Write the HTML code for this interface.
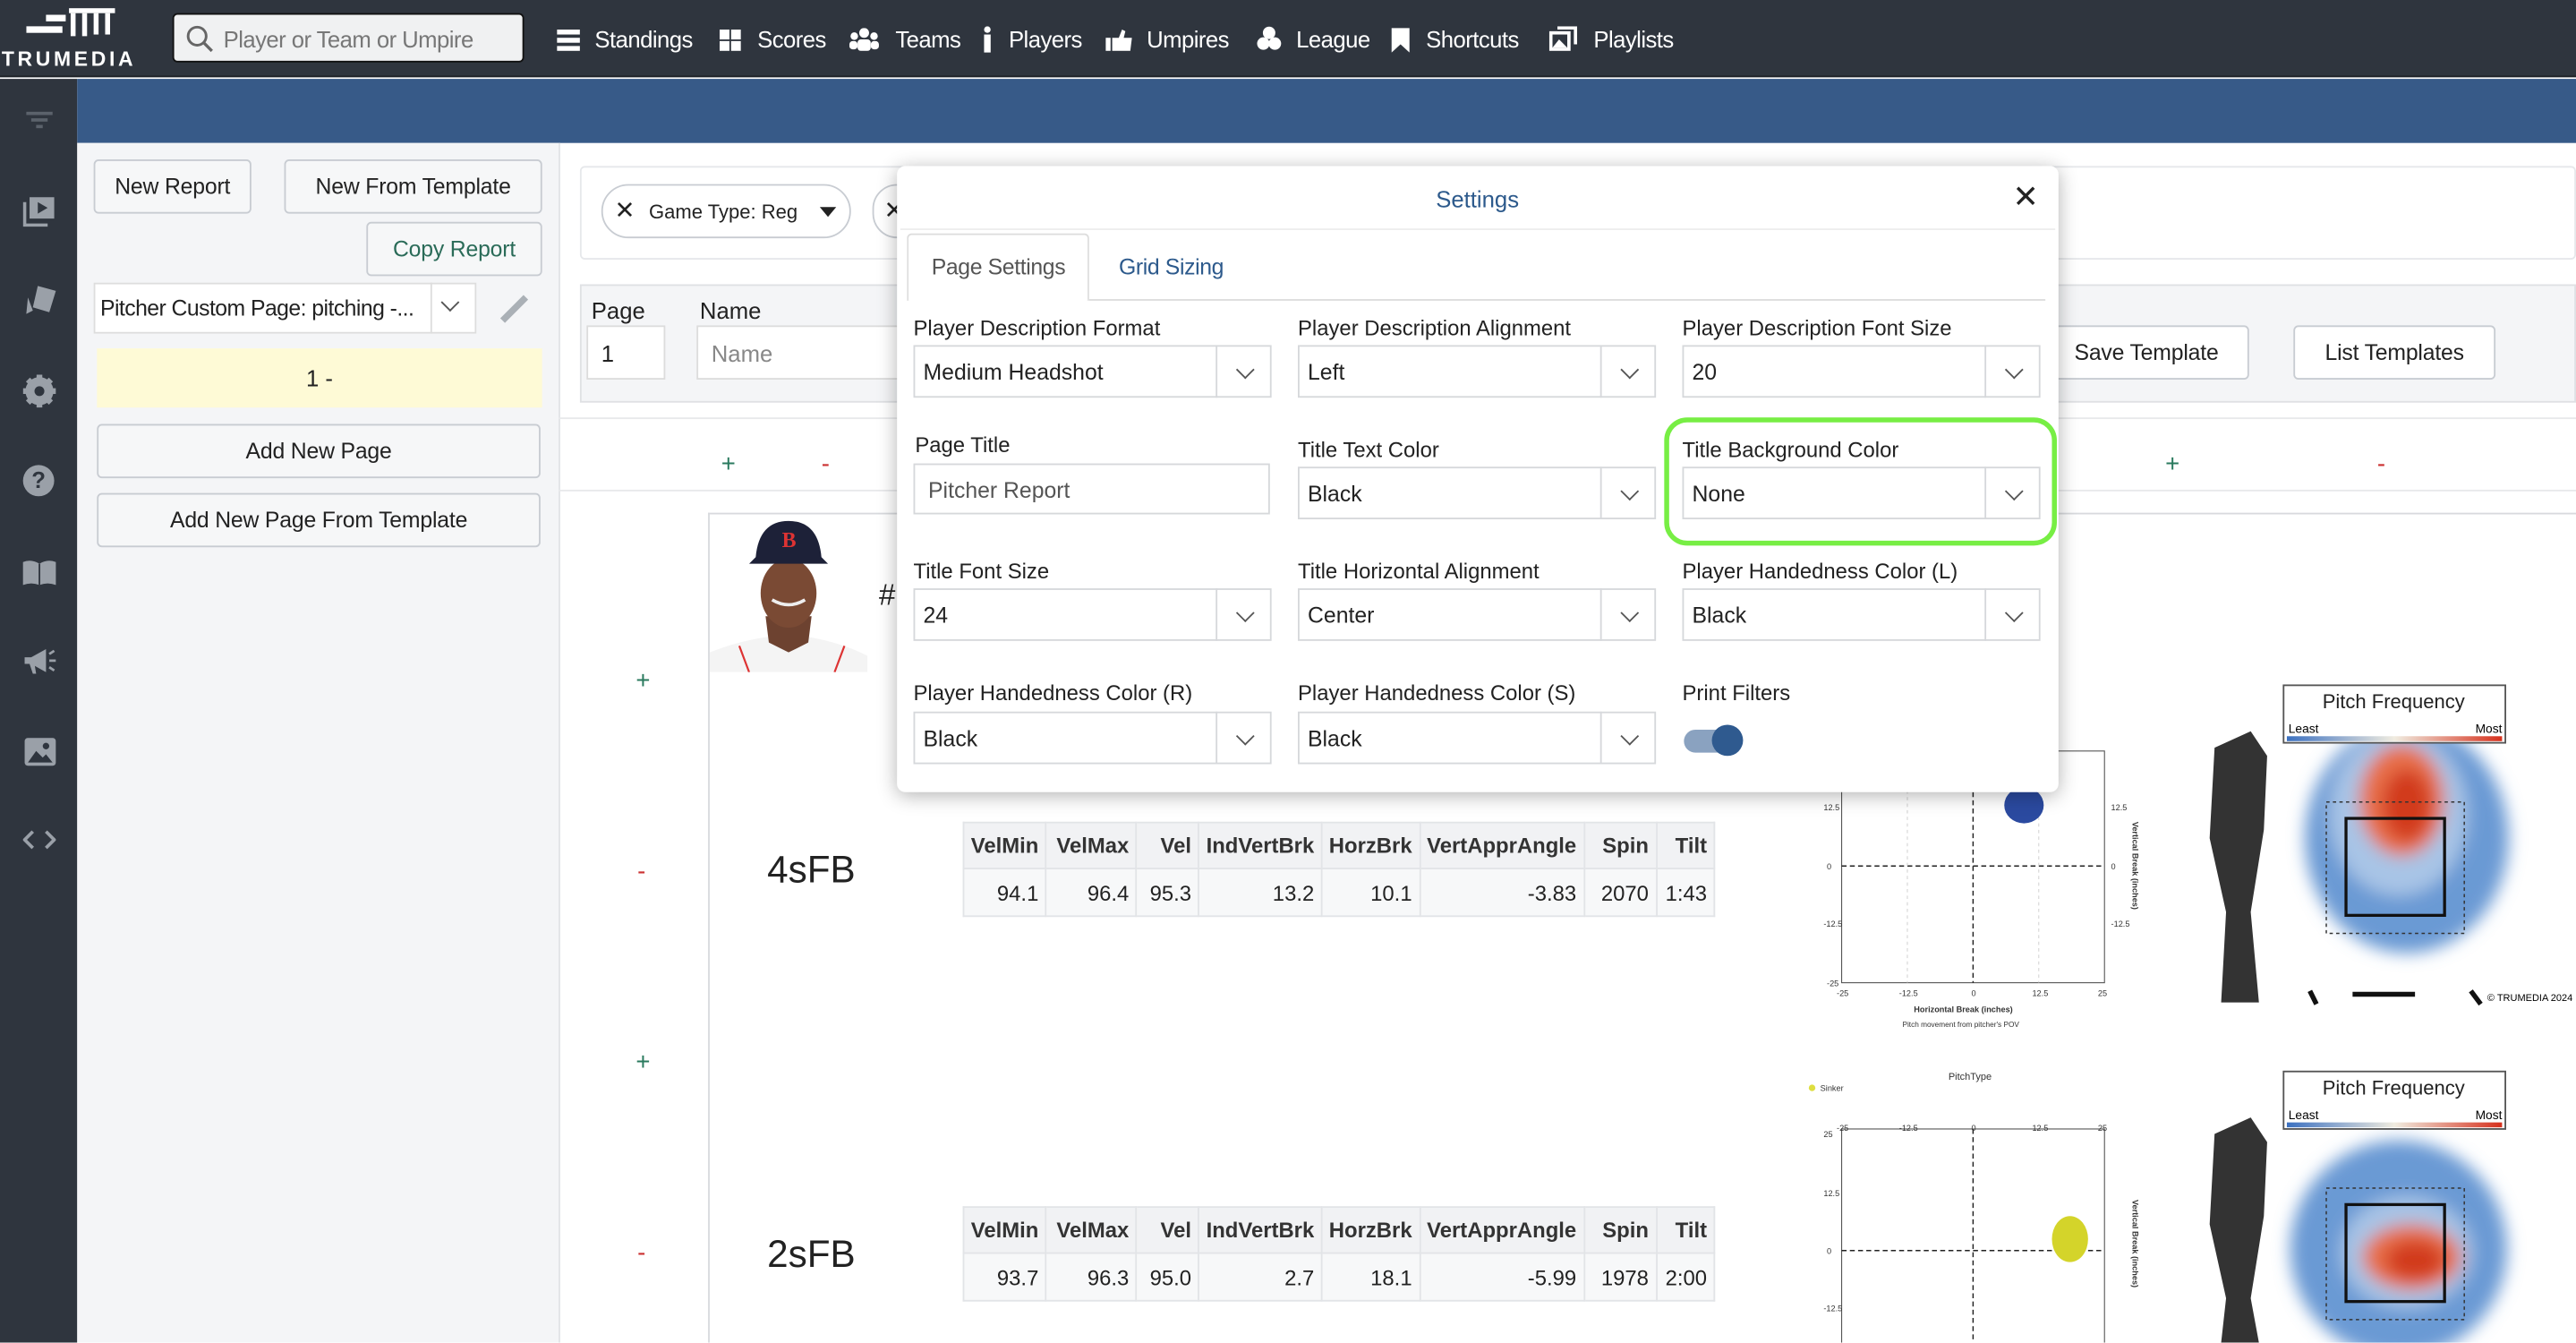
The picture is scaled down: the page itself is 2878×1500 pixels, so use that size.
<!DOCTYPE html>
<html><head><meta charset="utf-8"><style>
*{box-sizing:border-box;margin:0;padding:0}
html,body{width:2878px;height:1500px;overflow:hidden;background:#fff}
#w{position:absolute;left:0;top:0;width:1568px;height:817px;transform:scale(1.83546);transform-origin:0 0;font-family:"Liberation Sans",sans-serif;color:#222;overflow:hidden}
.a{position:absolute}
.nav{left:0;top:0;width:1568px;height:47px;background:#2f353e;border-bottom:1px solid #1e2228}
.ni{position:absolute;top:16px;color:#fff;font-size:14px;white-space:nowrap;letter-spacing:-0.3px}
.ic{position:absolute}
.btn{position:absolute;border:1px solid #c8ccd2;border-radius:3px;background:#f6f7f8;font-size:13.5px;text-align:center;color:#222;letter-spacing:-0.1px}
.sel{position:absolute;border:1px solid #d6d8db;background:#fff;height:32px;font-size:13.5px;padding:8px 0 0 5px}
.sel:after{content:"";position:absolute;right:-1px;top:-1px;width:33px;height:32px;border-left:1px solid #d6d8db}
.chev{position:absolute;right:11px;top:10px;width:8px;height:8px;border-right:1.5px solid #555;border-bottom:1.5px solid #555;transform:rotate(45deg)}
.lbl{position:absolute;font-size:13px;color:#222}
table{border-collapse:collapse;font-size:13px}
td{border:1px solid #e2e4e7;padding:0 4px;text-align:right;height:29px}
tr.h td{background:#f1f2f4;font-weight:bold;color:#333;height:28px}
tr.r td{background:#f7f8f9}
</style></head><body><div id="w">

<div class="a nav"></div>
<svg class="a" style="left:16px;top:3px" width="54" height="22" viewBox="0 0 54 22"><g fill="#fff"><rect x="0" y="13" width="22" height="4"/><rect x="12" y="6" width="12" height="4"/><rect x="26" y="2" width="28" height="3"/><rect x="27" y="5" width="3" height="14"/><rect x="34" y="5" width="3" height="14"/><rect x="41" y="5" width="3" height="13"/><rect x="48" y="5" width="3" height="13"/></g></svg>
<div class="a" style="left:1px;top:29px;color:#fff;font-size:12.5px;font-weight:bold;letter-spacing:2px">TRUMEDIA</div>
<div class="a" style="left:105px;top:8px;width:214px;height:30px;background:#f0f1f2;border-radius:3px;border:1px solid #111"></div>
<svg class="a" style="left:113px;top:15px" width="17" height="17"><circle cx="7" cy="7" r="5.5" fill="none" stroke="#666" stroke-width="1.6"/><line x1="11" y1="11" x2="16" y2="16" stroke="#666" stroke-width="1.8"/></svg>
<div class="a" style="left:136px;top:16px;font-size:14px;color:#777;letter-spacing:-0.3px">Player or Team or Umpire</div>

<svg class="ic" style="left:339px;top:18px" width="14" height="13"><g fill="#fff"><rect x="0" y="0" width="14" height="3"/><rect x="0" y="5" width="14" height="3"/><rect x="0" y="10" width="14" height="3"/></g></svg>
<div class="ni" style="left:362px">Standings</div>
<svg class="ic" style="left:438px;top:18px" width="13" height="13"><g fill="#fff"><rect x="0" y="0" width="6" height="6"/><rect x="7" y="0" width="6" height="6"/><rect x="0" y="7" width="6" height="6"/><rect x="7" y="7" width="6" height="6"/></g></svg>
<div class="ni" style="left:461px">Scores</div>
<svg class="ic" style="left:517px;top:17px" width="18" height="14"><g fill="#fff"><circle cx="9" cy="3" r="3"/><circle cx="3" cy="5" r="2.3"/><circle cx="15" cy="5" r="2.3"/><rect x="5" y="7" width="8" height="7" rx="2"/><rect x="0" y="8" width="5" height="5" rx="2"/><rect x="13" y="8" width="5" height="5" rx="2"/></g></svg>
<div class="ni" style="left:545px">Teams</div>
<svg class="ic" style="left:598px;top:16px" width="6" height="16"><g fill="#fff"><circle cx="3" cy="2" r="2"/><rect x="1" y="5" width="4" height="11"/></g></svg>
<div class="ni" style="left:614px">Players</div>
<svg class="ic" style="left:673px;top:18px" width="16" height="13"><g fill="#fff"><rect x="0" y="5" width="3" height="8"/><path d="M4 5 L8 5 L10 0 L12 1 L11 5 L16 5 L15 13 L4 13Z"/></g></svg>
<div class="ni" style="left:698px">Umpires</div>
<svg class="ic" style="left:765px;top:16px" width="15" height="15"><g fill="#fff"><circle cx="7.5" cy="4" r="3.8"/><circle cx="4" cy="10.5" r="3.8"/><circle cx="11" cy="10.5" r="3.8"/></g></svg>
<div class="ni" style="left:789px">League</div>
<svg class="ic" style="left:847px;top:17px" width="11" height="15"><path d="M0 0 H11 V15 L5.5 10 L0 15Z" fill="#fff"/></svg>
<div class="ni" style="left:868px">Shortcuts</div>
<svg class="ic" style="left:943px;top:16px" width="17" height="15"><g fill="none" stroke="#fff" stroke-width="2"><rect x="1" y="4" width="11" height="10"/><path d="M5 1 H16 V11"/></g><path d="M2 13 L6 8 L11 13Z" fill="#fff"/></svg>
<div class="ni" style="left:970px">Playlists</div>

<!-- sidebar -->
<div class="a" style="left:0;top:48px;width:47px;height:769px;background:#2f353e"></div>
<div class="a" style="left:16px;top:68px;width:16px;height:2px;background:#5b626b"></div>
<div class="a" style="left:19px;top:72px;width:10px;height:2px;background:#5b626b"></div>
<div class="a" style="left:22px;top:76px;width:4px;height:2px;background:#5b626b"></div>
<svg class="a" style="left:14px;top:118px" width="20" height="20"><path d="M4 2 H19 V15 H4Z" fill="#9aa0a8"/><path d="M9 5 L15 8.5 L9 12Z" fill="#2f353e"/><path d="M1 5 V19 H15" stroke="#9aa0a8" stroke-width="2" fill="none"/></svg>
<svg class="a" style="left:15px;top:173px" width="20" height="20"><path d="M8 1 L19 4 L15 17 L5 14Z" fill="#9aa0a8"/><path d="M2 8 L5 16 L1 18Z" fill="#9aa0a8"/></svg>
<svg class="a" style="left:14px;top:228px" width="20" height="20"><circle cx="10" cy="10" r="6.5" fill="none" stroke="#9aa0a8" stroke-width="4"/><g stroke="#9aa0a8" stroke-width="3.5"><line x1="10" y1="0" x2="10" y2="20"/><line x1="0" y1="10" x2="20" y2="10"/><line x1="3" y1="3" x2="17" y2="17"/><line x1="17" y1="3" x2="3" y2="17"/></g><circle cx="10" cy="10" r="3" fill="#2f353e"/></svg>
<div class="a" style="left:14px;top:283px;width:19px;height:19px;border-radius:50%;background:#9aa0a8;color:#2f353e;font-size:14px;font-weight:bold;text-align:center;line-height:19px">?</div>
<svg class="a" style="left:13px;top:340px" width="22" height="17"><path d="M1 2 Q6 0 11 3 Q16 0 21 2 V16 Q16 14 11 16 Q6 14 1 16Z" fill="#9aa0a8"/><line x1="11" y1="3" x2="11" y2="16" stroke="#2f353e"/></svg>
<svg class="a" style="left:14px;top:394px" width="20" height="17"><path d="M1 6 H5 L14 1 V15 L5 10 H1Z" fill="#9aa0a8"/><path d="M4 10 L6 16 H8 L7 10" fill="#9aa0a8"/><g stroke="#9aa0a8" stroke-width="1.5"><line x1="16" y1="8" x2="20" y2="8"/><line x1="16" y1="4" x2="19" y2="2"/><line x1="16" y1="12" x2="19" y2="14"/></g></svg>
<svg class="a" style="left:15px;top:449px" width="19" height="17"><rect x="0" y="0" width="19" height="17" rx="2" fill="#9aa0a8"/><path d="M2 15 L7 8 L11 12 L13 10 L17 15Z" fill="#2f353e"/><circle cx="13" cy="5" r="2" fill="#2f353e"/></svg>
<svg class="a" style="left:14px;top:505px" width="20" height="12"><path d="M6 1 L1 6 L6 11 M14 1 L19 6 L14 11" stroke="#9aa0a8" stroke-width="2" fill="none"/></svg>

<div class="a" style="left:47px;top:48px;width:1521px;height:39px;background:#375a88"></div>

<!-- left panel -->
<div class="a" style="left:47px;top:87px;width:294px;height:730px;background:#f4f5f7;border-right:1px solid #e2e4e7"></div>
<div class="btn" style="left:57px;top:97px;width:96px;height:33px;line-height:31px">New Report</div>
<div class="btn" style="left:173px;top:97px;width:157px;height:33px;line-height:31px">New From Template</div>
<div class="btn" style="left:223px;top:135px;width:107px;height:33px;line-height:31px;color:#2a6b58">Copy Report</div>
<div class="a" style="left:57px;top:172px;width:233px;height:31px;background:#fff;border:1px solid #ddd"></div>
<div class="a" style="left:262px;top:172px;width:1px;height:31px;background:#ddd"></div>
<div class="a" style="left:61px;top:180px;font-size:13.5px;letter-spacing:-0.3px;width:198px;overflow:hidden;white-space:nowrap">Pitcher Custom Page: pitching -...</div>
<div class="a" style="left:270px;top:180px;width:8px;height:8px;border-right:1.5px solid #555;border-bottom:1.5px solid #555;transform:rotate(45deg)"></div>
<div class="a" style="left:311px;top:178px;width:4px;height:20px;background:#aab0b6;transform:rotate(45deg)"></div>
<div class="a" style="left:59px;top:212px;width:271px;height:36px;background:#fefad6;text-align:center;line-height:36px;font-size:14px">1 -</div>
<div class="btn" style="left:59px;top:258px;width:270px;height:33px;line-height:31px">Add New Page</div>
<div class="btn" style="left:59px;top:300px;width:270px;height:33px;line-height:31px">Add New Page From Template</div>

<!-- main -->
<div class="a" style="left:353px;top:101px;width:1215px;height:57px;border:1px solid #e6e8eb;border-radius:3px"></div>
<div class="a" style="left:366px;top:112px;width:152px;height:33px;border:1px solid #c8ccd2;border-radius:17px;font-size:12px;padding:9px 0 0 28px">Game Type: Reg</div>
<div class="a" style="left:374px;top:119px;font-size:15px">✕</div>
<div class="a" style="left:499px;top:126px;border-left:5px solid transparent;border-right:5px solid transparent;border-top:6px solid #222"></div>
<div class="a" style="left:531px;top:112px;width:30px;height:33px;border:1px solid #c8ccd2;border-radius:17px"></div>
<div class="a" style="left:538px;top:119px;font-size:15px">✕</div>
<div class="a" style="left:353px;top:173px;width:1215px;height:72px;background:#f4f5f7;border:1px solid #dfe1e4"></div>
<div class="a" style="left:360px;top:181px;font-size:14px">Page</div>
<div class="a" style="left:426px;top:181px;font-size:14px">Name</div>
<div class="a" style="left:357px;top:198px;width:48px;height:33px;background:#fff;border:1px solid #dcdcdc;font-size:14px;padding:8px 0 0 8px">1</div>
<div class="a" style="left:424px;top:198px;width:140px;height:33px;background:#fff;border:1px solid #dcdcdc;font-size:14px;padding:8px 0 0 8px;color:#888">Name</div>
<div class="btn" style="left:1244px;top:198px;width:125px;height:33px;line-height:31px;background:#fff">Save Template</div>
<div class="btn" style="left:1396px;top:198px;width:123px;height:33px;line-height:31px;background:#fff">List Templates</div>
<div class="a" style="left:340px;top:254px;width:1228px;height:1px;background:#e8e9eb"></div>
<div class="a" style="left:439px;top:274px;color:#2a7a5e;font-size:15px">+</div>
<div class="a" style="left:500px;top:274px;color:#c33;font-size:15px">-</div>
<div class="a" style="left:1318px;top:274px;color:#2a7a5e;font-size:15px">+</div>
<div class="a" style="left:1447px;top:274px;color:#c33;font-size:15px">-</div>
<div class="a" style="left:340px;top:298px;width:1228px;height:1px;background:#e8e9eb"></div>
<div class="a" style="left:387px;top:406px;color:#2a7a5e;font-size:15px">+</div>
<div class="a" style="left:388px;top:522px;color:#c33;font-size:15px">-</div>
<div class="a" style="left:387px;top:638px;color:#2a7a5e;font-size:15px">+</div>
<div class="a" style="left:388px;top:754px;color:#c33;font-size:15px">-</div>
<div class="a" style="left:431px;top:312px;width:1137px;height:505px;border-left:1px solid #d8dade;border-top:1px solid #d8dade"></div>
<svg class="a" style="left:432px;top:313px" width="97" height="96" viewBox="0 0 97 96">
<path d="M0 96 L0 84 Q20 76 40 74 L56 74 Q78 77 96 86 L96 96Z" fill="#f4f4f4"/>
<path d="M18 80 L24 96 M82 80 L76 96" stroke="#d33" stroke-width="1.2"/>
<path d="M34 62 L36 78 L48 84 L60 78 L62 62Z" fill="#6d4230"/>
<ellipse cx="48" cy="48" rx="17" ry="21" fill="#7a4a34"/>
<path d="M28 26 Q30 4 48 4 Q66 4 68 26 L72 30 L24 30Z" fill="#1d2138"/>
<text x="44" y="20" font-size="13" font-weight="bold" fill="#d33" font-family="Liberation Serif">B</text>
<path d="M38 52 Q48 58 58 52" stroke="#eee" stroke-width="2" fill="none"/>
</svg>
<div class="a" style="left:535px;top:352px;font-size:18px">#</div>
<div class="a" style="left:467px;top:516px;font-size:23px">4sFB</div>
<div class="a" style="left:467px;top:750px;font-size:23px">2sFB</div>

<table class="a" style="left:586px;top:500px;width:458px">
<tr class="h"><td style="width:50px;text-align:left">VelMin</td><td style="width:55px">VelMax</td><td style="width:38px">Vel</td><td style="width:74px">IndVertBrk</td><td style="width:59px">HorzBrk</td><td style="width:96px">VertApprAngle</td><td style="width:44px">Spin</td><td>Tilt</td></tr>
<tr class="r"><td>94.1</td><td>96.4</td><td>95.3</td><td>13.2</td><td>10.1</td><td>-3.83</td><td>2070</td><td>1:43</td></tr></table>
<table class="a" style="left:586px;top:734px;width:458px">
<tr class="h"><td style="width:50px;text-align:left">VelMin</td><td style="width:55px">VelMax</td><td style="width:38px">Vel</td><td style="width:74px">IndVertBrk</td><td style="width:59px">HorzBrk</td><td style="width:96px">VertApprAngle</td><td style="width:44px">Spin</td><td>Tilt</td></tr>
<tr class="r"><td>93.7</td><td>96.3</td><td>95.0</td><td>2.7</td><td>18.1</td><td>-5.99</td><td>1978</td><td>2:00</td></tr></table>

<svg class="a" style="left:1100px;top:440px" width="210" height="190" viewBox="0 0 210 190" font-family="Liberation Sans" font-size="5" fill="#333">
<rect x="21" y="17" width="160" height="141" fill="none" stroke="#555" stroke-width="0.6"/>
<line x1="101" y1="17" x2="101" y2="158" stroke="#222" stroke-width="0.8" stroke-dasharray="3,2"/>
<line x1="21" y1="87" x2="181" y2="87" stroke="#222" stroke-width="0.8" stroke-dasharray="3,2"/>
<line x1="61" y1="17" x2="61" y2="158" stroke="#ccc" stroke-width="0.5" stroke-dasharray="2,2"/>
<line x1="141" y1="17" x2="141" y2="158" stroke="#ccc" stroke-width="0.5" stroke-dasharray="2,2"/>
<ellipse cx="132" cy="50" rx="12" ry="11" fill="#2b4aa0"/>
<text x="10" y="53">12.5</text><text x="12" y="89">0</text><text x="10" y="124">-12.5</text><text x="12" y="160">-25</text>
<text x="185" y="53">12.5</text><text x="185" y="89">0</text><text x="185" y="124">-12.5</text>
<text x="18" y="166">-25</text><text x="56" y="166">-12.5</text><text x="100" y="166">0</text><text x="137" y="166">12.5</text><text x="177" y="166">25</text>
<text x="65" y="176" font-weight="bold">Horizontal Break (inches)</text><text x="58" y="185" font-size="4.5">Pitch movement from pitcher's POV</text>
<text x="198" y="60" transform="rotate(90 198 60)" font-weight="bold">Vertical Break (inches)</text>
</svg>
<svg class="a" style="left:1100px;top:650px" width="210" height="167" viewBox="0 0 210 167" font-family="Liberation Sans" font-size="5" fill="#333">
<text x="86" y="7" font-size="6">PitchType</text><circle cx="3" cy="12" r="2" fill="#dede40"/><text x="8" y="14">Sinker</text>
<rect x="21" y="37" width="160" height="140" fill="none" stroke="#555" stroke-width="0.6"/>
<line x1="101" y1="37" x2="101" y2="167" stroke="#222" stroke-width="0.8" stroke-dasharray="3,2"/>
<line x1="21" y1="111" x2="181" y2="111" stroke="#222" stroke-width="0.8" stroke-dasharray="3,2"/>
<ellipse cx="160" cy="104" rx="11" ry="14" fill="#d4d42a"/>
<text x="10" y="42">25</text><text x="10" y="78">12.5</text><text x="12" y="113">0</text><text x="10" y="148">-12.5</text>
<text x="18" y="38">-25</text><text x="56" y="38">-12.5</text><text x="100" y="38">0</text><text x="137" y="38">12.5</text><text x="177" y="38">25</text>
<text x="198" y="80" transform="rotate(90 198 80)" font-weight="bold">Vertical Break (inches)</text>
</svg>

<svg class="a" style="left:1340px;top:415px" width="228" height="200" viewBox="0 0 228 200">
<defs><linearGradient id="lg"><stop offset="0" stop-color="#3b70c0"/><stop offset="0.5" stop-color="#f0ece0"/><stop offset="1" stop-color="#d6301c"/></linearGradient>
<filter id="bl"><feGaussianBlur stdDeviation="5"/></filter></defs>
<g filter="url(#bl)">
<ellipse cx="125" cy="95" rx="62" ry="70" fill="#6a9ad4"/>
<ellipse cx="120" cy="80" rx="42" ry="50" fill="#a8c4e6"/>
<ellipse cx="122" cy="72" rx="26" ry="34" fill="#e8704a"/>
<ellipse cx="125" cy="75" rx="15" ry="22" fill="#d23a1c"/>
</g>
<rect x="88" y="83" width="60" height="59" fill="none" stroke="#111" stroke-width="1.8"/>
<rect x="76" y="73" width="84" height="80" fill="none" stroke="#333" stroke-width="0.8" stroke-dasharray="2,2"/>
<path d="M8 40 L30 30 L40 45 L38 90 L30 140 L35 195 L12 195 L15 140 L5 95Z" fill="#333"/>
<rect x="50" y="2" width="135" height="35" fill="#fff" stroke="#555"/>
<text x="117" y="16" text-anchor="middle" font-family="Liberation Sans" font-size="12" fill="#222">Pitch Frequency</text>
<text x="53" y="31" font-family="Liberation Sans" font-size="7.5">Least</text><text x="183" y="31" text-anchor="end" font-family="Liberation Sans" font-size="7.5">Most</text>
<rect x="52" y="33" width="131" height="3" fill="url(#lg)"/>
<path d="M66 188 L70 196 M92 190 L130 190 M164 188 L170 196" stroke="#111" stroke-width="3"/>
<text x="174" y="194" font-family="Liberation Sans" font-size="6">© TRUMEDIA 2024</text>
</svg>
<svg class="a" style="left:1340px;top:650px" width="228" height="167" viewBox="0 0 228 167">
<g filter="url(#bl)">
<ellipse cx="120" cy="110" rx="66" ry="66" fill="#6a9ad4"/>
<ellipse cx="125" cy="112" rx="40" ry="34" fill="#a8c4e6"/>
<ellipse cx="128" cy="115" rx="30" ry="20" fill="#e8704a"/>
<ellipse cx="130" cy="117" rx="18" ry="12" fill="#d23a1c"/>
</g>
<rect x="88" y="83" width="60" height="59" fill="none" stroke="#111" stroke-width="1.8"/>
<rect x="76" y="73" width="84" height="80" fill="none" stroke="#333" stroke-width="0.8" stroke-dasharray="2,2"/>
<path d="M8 40 L30 30 L40 45 L38 90 L30 140 L35 167 L12 167 L15 140 L5 95Z" fill="#333"/>
<rect x="50" y="2" width="135" height="35" fill="#fff" stroke="#555"/>
<text x="117" y="16" text-anchor="middle" font-family="Liberation Sans" font-size="12" fill="#222">Pitch Frequency</text>
<text x="53" y="31" font-family="Liberation Sans" font-size="7.5">Least</text><text x="183" y="31" text-anchor="end" font-family="Liberation Sans" font-size="7.5">Most</text>
<rect x="52" y="33" width="131" height="3" fill="url(#lg)"/>
</svg>

<!-- modal -->
<div class="a" style="left:546px;top:101px;width:707px;height:381px;background:#fff;border-radius:5px;box-shadow:0 2px 12px rgba(0,0,0,0.3)"></div>
<div class="a" style="left:874px;top:113px;font-size:14px;color:#2d5a8c">Settings</div>
<div class="a" style="left:1225px;top:109px;font-size:19px">✕</div>
<div class="a" style="left:548px;top:139px;width:703px;height:1px;background:#eee"></div>
<div class="a" style="left:552px;top:142px;width:111px;height:41px;border:1px solid #ddd;border-bottom:none;background:#fff;border-radius:3px 3px 0 0"></div>
<div class="a" style="left:567px;top:155px;font-size:13.5px;color:#555;letter-spacing:-0.2px">Page Settings</div>
<div class="a" style="left:681px;top:155px;font-size:13.5px;color:#2d5a8c;letter-spacing:-0.2px">Grid Sizing</div>
<div class="a" style="left:663px;top:182px;width:582px;height:1px;background:#ddd"></div>

<div class="lbl" style="left:556px;top:192px">Player Description Format</div>
<div class="lbl" style="left:790px;top:192px">Player Description Alignment</div>
<div class="lbl" style="left:1024px;top:192px">Player Description Font Size</div>
<div class="sel" style="left:556px;top:210px;width:218px">Medium Headshot<i class="chev"></i></div>
<div class="sel" style="left:790px;top:210px;width:218px">Left<i class="chev"></i></div>
<div class="sel" style="left:1024px;top:210px;width:218px">20<i class="chev"></i></div>

<div class="lbl" style="left:557px;top:263px">Page Title</div>
<div class="a" style="left:556px;top:282px;width:217px;height:31px;border:1px solid #d6d8db;font-size:13.5px;padding:8px 0 0 8px;color:#555">Pitcher Report</div>
<div class="lbl" style="left:790px;top:266px">Title Text Color</div>
<div class="sel" style="left:790px;top:284px;width:218px">Black<i class="chev"></i></div>
<div class="lbl" style="left:1024px;top:266px">Title Background Color</div>
<div class="sel" style="left:1024px;top:284px;width:218px">None<i class="chev"></i></div>
<div class="a" style="left:1013px;top:254px;width:239px;height:78px;border:3.5px solid #77ee44;border-radius:14px"></div>

<div class="lbl" style="left:556px;top:340px">Title Font Size</div>
<div class="lbl" style="left:790px;top:340px">Title Horizontal Alignment</div>
<div class="lbl" style="left:1024px;top:340px">Player Handedness Color (L)</div>
<div class="sel" style="left:556px;top:358px;width:218px">24<i class="chev"></i></div>
<div class="sel" style="left:790px;top:358px;width:218px">Center<i class="chev"></i></div>
<div class="sel" style="left:1024px;top:358px;width:218px">Black<i class="chev"></i></div>

<div class="lbl" style="left:556px;top:414px">Player Handedness Color (R)</div>
<div class="lbl" style="left:790px;top:414px">Player Handedness Color (S)</div>
<div class="lbl" style="left:1024px;top:414px">Print Filters</div>
<div class="sel" style="left:556px;top:433px;width:218px">Black<i class="chev"></i></div>
<div class="sel" style="left:790px;top:433px;width:218px">Black<i class="chev"></i></div>
<div class="a" style="left:1025px;top:444px;width:34px;height:14px;border-radius:7px;background:#8aa2c0"></div>
<div class="a" style="left:1042px;top:441px;width:19px;height:19px;border-radius:50%;background:#2f5a8f"></div>
</div></body></html>
